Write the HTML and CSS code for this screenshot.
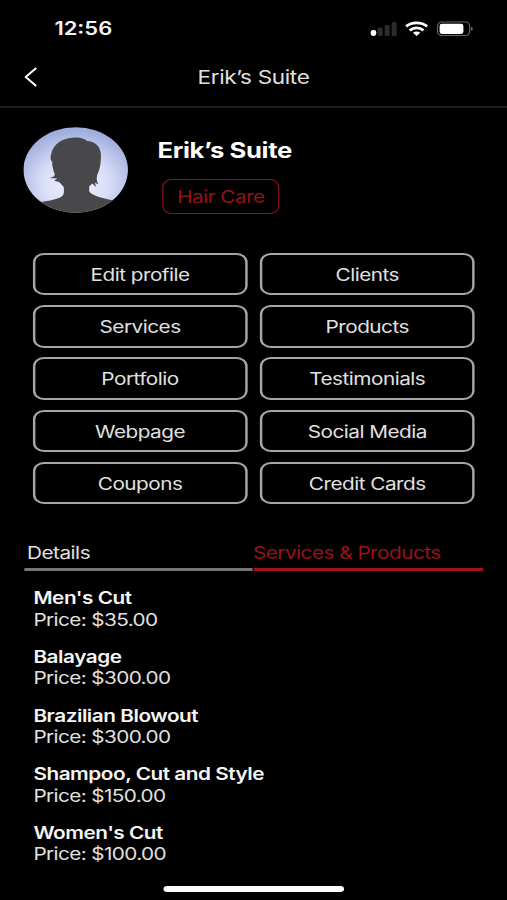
FILE: index.html
```html
<!DOCTYPE html>
<html lang="en">
<head>
<meta charset="utf-8">
<title>Erik’s Suite</title>
<link rel="stylesheet" href="styles.css">
</head>
<body>
<div class="phone">
  <header class="status">
    <span class="time">12:56</span>
    <svg class="status-icons" viewBox="0 0 104 16" preserveAspectRatio="none">
      <rect x="1" y="9" width="5.6" height="6" rx="2.4" fill="#fff"/>
      <rect x="8" y="6.5" width="5" height="8.5" rx="1.5" fill="#2c2c2c"/>
      <rect x="15" y="4" width="5" height="11" rx="1.5" fill="#2c2c2c"/>
      <rect x="22" y="1" width="5" height="14" rx="1.5" fill="#2c2c2c"/>
      <g fill="none" stroke="#fff" stroke-width="2.8">
        <path d="M36.500 5.400C42.200 .6 51.800 .6 57.500 5.400"/>
        <path d="M40.100 9.300C44.200 6 49.800 6 53.900 9.300"/>
      </g>
      <path d="M43.300 11.800Q47 9.300 50.700 11.800L47 15Z" fill="#fff"/>
      <rect x="68" y="1" width="32" height="13.500" rx="4" fill="none" stroke="#666" stroke-width="1.200"/>
      <rect x="70" y="2.700" width="23.800" height="10.200" rx="2.300" fill="#fff"/>
      <path d="M101.300 5.700Q103.300 6 103.300 7.800Q103.300 9.600 101.300 10Z" fill="#666"/>
    </svg>
  </header>

  <nav class="nav">
    <svg class="back" viewBox="0 0 13 20" preserveAspectRatio="none"><path d="M11.800 1L1.300 10L11.800 19" fill="none" stroke="#fff" stroke-width="2"/></svg>
    <h1 class="title">Erik’s Suite</h1>
  </nav>

  <section class="profile">
    <svg class="avatar" viewBox="0 0 105 86" preserveAspectRatio="none">
      <defs>
        <radialGradient id="sky" cx=".5" cy=".66" r=".62">
          <stop offset="0" stop-color="#f0f1ff"/>
          <stop offset=".5" stop-color="#dadef8"/>
          <stop offset="1" stop-color="#a0aedd"/>
        </radialGradient>
        <clipPath id="round"><ellipse cx="52.500" cy="43" rx="52.200" ry="42.800"/></clipPath>
      </defs>
      <g clip-path="url(#round)">
        <rect width="105" height="86" fill="url(#sky)"/>
        <path fill="#48484a" d="M51 10.500C57 10 61 11.500 64 14C71 14 77 19 77.700 27C78 36 76.500 43 74 48C73 52 73.500 55 75.500 57.500L71.500 55.500L73 60L69 56.500L66 59.500L66 64.500C68 68 78 71 90 73.500L103 86H3L18 75C26 74 35 72 38.500 69.500C41 68 41 65 40.500 60L36 55L31 53.800L34 51.500L26.500 51C30 50.200 32 49 31.500 47C29.500 42 29 38 29 35C27 33 27 30 28 27C30 17 39 11 51 10.500Z"/>
      </g>
    </svg>
    <div class="identity">
      <h2 class="name">Erik’s Suite</h2>
      <span class="badge">Hair Care</span>
    </div>
  </section>

  <section class="actions">
    <button>Edit profile</button><button>Clients</button>
    <button>Services</button><button>Products</button>
    <button>Portfolio</button><button>Testimonials</button>
    <button>Webpage</button><button>Social Media</button>
    <button>Coupons</button><button>Credit Cards</button>
  </section>

  <section class="tabs">
    <a class="tab">Details</a>
    <a class="tab active">Services &amp; Products</a>
  </section>

  <ul class="list">
    <li><b>Men's Cut</b><span>Price: $35.00</span></li>
    <li><b>Balayage</b><span>Price: $300.00</span></li>
    <li><b>Brazilian Blowout</b><span>Price: $300.00</span></li>
    <li><b>Shampoo, Cut and Style</b><span>Price: $150.00</span></li>
    <li><b>Women's Cut</b><span>Price: $100.00</span></li>
  </ul>

  <div class="home"></div>
</div>
</body>
</html>
```
FILE: styles.css
```css
* { box-sizing: border-box; margin: 0; padding: 0; }
html, body { width: 507px; height: 900px; overflow: hidden; background: #000; }

/* The whole screen is laid out narrow, then widened by 1.22. */
.phone {
  display: flex;
  flex-direction: column;
  width: 415.57px;
  height: 900px;
  transform: scaleX(1.22);
  transform-origin: 0 0;
  background: #000;
  color: #e0e0e0;
  font-family: Inter, "Liberation Sans", sans-serif;
  font-size: 17px;
  letter-spacing: -0.42px;
}

.status {
  display: flex;
  justify-content: space-between;
  align-items: center;
  height: 56px;
  padding: 1px 27.1px 0 44.6px;
}
.time { color: #f4f4f4; font-size: 18px; font-weight: 600; letter-spacing: 0; }
.status-icons { width: 85.2px; height: 16px; }

.nav {
  display: grid;
  grid-template-columns: 40px 1fr 40px;
  align-items: center;
  height: 52px;
  padding-bottom: 8px;
  border-bottom: 2px solid #1e1e1e;
}
.back { width: 10.7px; height: 20px; margin-left: 20px; }
.title { text-align: center; font-size: 18.5px; font-weight: 400; letter-spacing: -0.3px; }

.profile { display: flex; height: 145px; padding: 19px 0 0 19.2px; }
.avatar { width: 86.1px; height: 86px; }
.identity { display: flex; flex-direction: column; align-items: flex-start; padding: 10px 0 0 23.9px; }
.name { color: #fff; font-size: 21px; line-height: 28px; font-weight: 700; letter-spacing: -0.3px; }
.badge {
  width: 95.5px;
  height: 35px;
  margin: 14px 0 0 4.2px;
  border: 1.5px solid #8e1219;
  border-radius: 8px;
  color: #981219;
  line-height: 35px;
  text-align: center;
}

.actions {
  display: grid;
  grid-template-columns: 1fr 1fr;
  grid-auto-rows: 42.4px;
  gap: 9.8px;
  padding: 0 26.3px 0 26.6px;
}
.actions button {
  border: 2px solid #a6a6a6;
  border-radius: 9px;
  background: none;
  color: inherit;
  font: inherit;
  letter-spacing: inherit;
  padding-top: 1.5px;
}

.tabs {
  display: grid;
  grid-template-columns: 187px 1fr;
  gap: 1px;
  height: 36px;
  margin: 30.6px 19.6px 0 20.3px;
}
.tab { border-bottom: 3px solid #777; padding: 3px 0 0 1.9px; line-height: 30px; white-space: nowrap; }
.tab.active { padding-left: 0; border-color: #a51219; color: #981219; text-indent: -1px; }

.list { list-style: none; padding: 17.6px 0 0 27.4px; }
.list li { height: 58.6px; line-height: 21.5px; }
.list b, .list span { display: block; }
.list b { color: #f4f4f4; font-weight: 600; letter-spacing: -0.38px; }
.list span { letter-spacing: -0.5px; }

.home { width: 148px; height: 6px; margin: auto auto 8px 134.4px; border-radius: 3px; background: #fff; }
```
